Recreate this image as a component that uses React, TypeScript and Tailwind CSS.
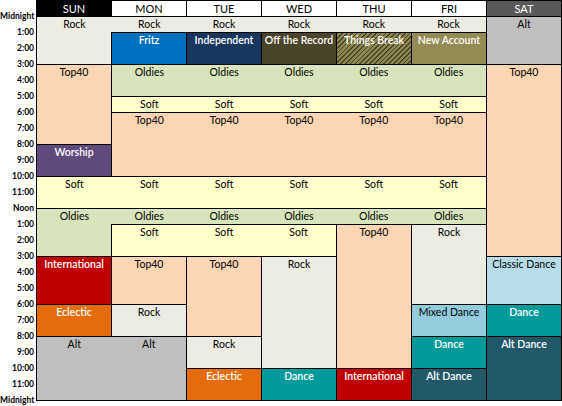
import React from 'react'

type Block = {
  pos: string
  labels: string[]
  bg: string
  dark?: boolean
  noTop?: boolean
}

const TIMES = [
  'Midnight', '1:00', '2:00', '3:00', '4:00', '5:00', '6:00', '7:00', '8:00', '9:00', '10:00', '11:00',
  'Noon', '1:00', '2:00', '3:00', '4:00', '5:00', '6:00', '7:00', '8:00', '9:00', '10:00', '11:00', 'Midnight',
]

const DAYS = [
  { d: 'SUN', cls: 'bg-black text-white' },
  { d: 'MON', cls: 'bg-white text-black' },
  { d: 'TUE', cls: 'bg-white text-black' },
  { d: 'WED', cls: 'bg-white text-black' },
  { d: 'THU', cls: 'bg-white text-black' },
  { d: 'FRI', cls: 'bg-white text-black' },
  { d: 'SAT', cls: 'bg-[#595959] text-white' },
]

const ROCK = 'bg-[#ecece3]'
const TOP40 = 'bg-[#fcd5b4]'
const OLDIES = 'bg-[#d7e4bc]'
const SOFT = 'bg-[#ffffcc]'
const ALT = 'bg-[#bfbfbf]'
const DANCE = 'bg-[#009a9a]'
const ALTDANCE = 'bg-[#215968]'
const INTL = 'bg-[#c00000]'
const ECLECTIC = 'bg-[#e46c0a]'

const BLOCKS: Block[] = [
  // early morning
  { pos: 'col-start-1 col-span-6 row-start-1 row-span-1', labels: ['Rock', 'Rock', 'Rock', 'Rock', 'Rock', 'Rock'], bg: ROCK },
  { pos: 'col-start-1 col-span-1 row-start-2 row-span-2', labels: [], bg: ROCK, noTop: true },
  { pos: 'col-start-2 col-span-1 row-start-2 row-span-2', labels: ['Fritz'], bg: 'bg-[#0070c0]', dark: true },
  { pos: 'col-start-3 col-span-1 row-start-2 row-span-2', labels: ['Independent'], bg: 'bg-[#17375e]', dark: true },
  { pos: 'col-start-4 col-span-1 row-start-2 row-span-2', labels: ['Off the Record'], bg: 'bg-[#4a452a]', dark: true },
  {
    pos: 'col-start-5 col-span-1 row-start-2 row-span-2',
    labels: ['Things Break'],
    bg: 'bg-[#8f8750] bg-[image:repeating-linear-gradient(135deg,#4a452a_0px,#4a452a_1.2px,transparent_1.2px,transparent_3.4px)]',
    dark: true,
  },
  { pos: 'col-start-6 col-span-1 row-start-2 row-span-2', labels: ['New Account'], bg: 'bg-[#948a54]', dark: true },
  { pos: 'col-start-7 col-span-1 row-start-1 row-span-3', labels: ['Alt'], bg: ALT },
  // morning
  { pos: 'col-start-1 col-span-1 row-start-4 row-span-5', labels: ['Top40'], bg: TOP40 },
  { pos: 'col-start-2 col-span-5 row-start-4 row-span-2', labels: ['Oldies', 'Oldies', 'Oldies', 'Oldies', 'Oldies'], bg: OLDIES },
  { pos: 'col-start-7 col-span-1 row-start-4 row-span-12', labels: ['Top40'], bg: TOP40 },
  { pos: 'col-start-2 col-span-5 row-start-6 row-span-1', labels: ['Soft', 'Soft', 'Soft', 'Soft', 'Soft'], bg: SOFT },
  { pos: 'col-start-2 col-span-5 row-start-7 row-span-4', labels: ['Top40', 'Top40', 'Top40', 'Top40', 'Top40'], bg: TOP40 },
  { pos: 'col-start-1 col-span-1 row-start-9 row-span-2', labels: ['Worship'], bg: 'bg-[#604a7b]', dark: true },
  { pos: 'col-start-1 col-span-6 row-start-11 row-span-2', labels: ['Soft', 'Soft', 'Soft', 'Soft', 'Soft', 'Soft'], bg: SOFT },
  // afternoon
  { pos: 'col-start-1 col-span-6 row-start-13 row-span-1', labels: ['Oldies', 'Oldies', 'Oldies', 'Oldies', 'Oldies', 'Oldies'], bg: OLDIES },
  { pos: 'col-start-1 col-span-1 row-start-14 row-span-2', labels: [], bg: OLDIES, noTop: true },
  { pos: 'col-start-2 col-span-3 row-start-14 row-span-2', labels: ['Soft', 'Soft', 'Soft'], bg: SOFT },
  { pos: 'col-start-5 col-span-1 row-start-14 row-span-9', labels: ['Top40'], bg: TOP40 },
  { pos: 'col-start-6 col-span-1 row-start-14 row-span-5', labels: ['Rock'], bg: ROCK },
  { pos: 'col-start-1 col-span-1 row-start-16 row-span-3', labels: ['International'], bg: INTL, dark: true },
  { pos: 'col-start-2 col-span-1 row-start-16 row-span-3', labels: ['Top40'], bg: TOP40 },
  { pos: 'col-start-3 col-span-1 row-start-16 row-span-5', labels: ['Top40'], bg: TOP40 },
  { pos: 'col-start-4 col-span-1 row-start-16 row-span-7', labels: ['Rock'], bg: ROCK },
  { pos: 'col-start-7 col-span-1 row-start-16 row-span-3', labels: ['Classic Dance'], bg: 'bg-[#b7dee8]' },
  // evening
  { pos: 'col-start-1 col-span-1 row-start-19 row-span-2', labels: ['Eclectic'], bg: ECLECTIC, dark: true },
  { pos: 'col-start-2 col-span-1 row-start-19 row-span-2', labels: ['Rock'], bg: ROCK },
  { pos: 'col-start-6 col-span-1 row-start-19 row-span-2', labels: ['Mixed Dance'], bg: 'bg-[#93cddd]' },
  { pos: 'col-start-7 col-span-1 row-start-19 row-span-2', labels: ['Dance'], bg: DANCE, dark: true },
  { pos: 'col-start-1 col-span-2 row-start-21 row-span-4', labels: ['Alt', 'Alt'], bg: ALT },
  { pos: 'col-start-3 col-span-1 row-start-21 row-span-2', labels: ['Rock'], bg: ROCK },
  { pos: 'col-start-6 col-span-1 row-start-21 row-span-2', labels: ['Dance'], bg: DANCE, dark: true },
  { pos: 'col-start-7 col-span-1 row-start-21 row-span-4', labels: ['Alt Dance'], bg: ALTDANCE, dark: true },
  { pos: 'col-start-3 col-span-1 row-start-23 row-span-2', labels: ['Eclectic'], bg: ECLECTIC, dark: true },
  { pos: 'col-start-4 col-span-1 row-start-23 row-span-2', labels: ['Dance'], bg: DANCE, dark: true },
  { pos: 'col-start-5 col-span-1 row-start-23 row-span-2', labels: ['International'], bg: INTL, dark: true },
  { pos: 'col-start-6 col-span-1 row-start-23 row-span-2', labels: ['Alt Dance'], bg: ALTDANCE, dark: true },
]

export default function App() {
  return (
    <div className="w-[562px] h-[406px] bg-white flex overflow-hidden font-['Lato','Liberation_Sans',sans-serif] text-black">
      {/* hour labels */}
      <div className="w-[36px] pt-[8px] flex flex-col shrink-0">
        {TIMES.map((t, i) => (
          <div key={i} className="h-[16px] leading-[16px] text-right pr-[2px] text-[8.5px] font-bold whitespace-nowrap">
            {t}
          </div>
        ))}
      </div>

      <div className="w-[526px] flex flex-col">
        {/* day header */}
        <div className="grid grid-cols-[repeat(7,75px)] h-[16px] border-r border-black">
          {DAYS.map(d => (
            <div key={d.d} className={`${d.cls} border-t border-l border-black text-center text-[11px] leading-[15px]`}>
              {d.d}
            </div>
          ))}
        </div>

        {/* schedule */}
        <div className="grid grid-cols-[repeat(7,75px)] grid-rows-[repeat(24,16px)] border-r border-b border-black">
          {BLOCKS.map((b, i) => (
            <div
              key={i}
              className={`${b.pos} ${b.bg} border-l border-black ${b.noTop ? '' : 'border-t'} ${b.dark ? 'text-white font-semibold' : 'text-black'} flex`}
            >
              {b.labels.map((l, j) => (
                <div key={j} className="flex-1 text-center text-[10.5px] leading-[15px] whitespace-nowrap">
                  {l}
                </div>
              ))}
            </div>
          ))}
        </div>
      </div>
    </div>
  )
}
